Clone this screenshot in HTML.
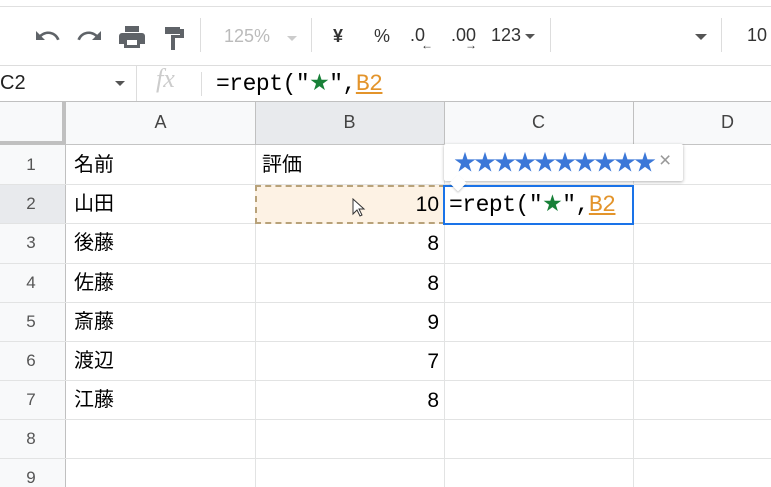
<!DOCTYPE html>
<html><head><meta charset="utf-8"><style>
*{margin:0;padding:0;box-sizing:border-box}
html,body{width:771px;height:487px;overflow:hidden}
body{background:#fff;font-family:"Liberation Sans","Noto Sans CJK JP",sans-serif;position:relative}
.abs{position:absolute}
.tb{color:#333;font-size:18px}
.vsep{position:absolute;width:1px;background:#ddd}
.cell{position:absolute;font-size:20px;color:#000;line-height:39px}
.rn{position:absolute;left:0;width:62px;text-align:center;color:#555;font-size:17px;line-height:39px}
.hl{position:absolute;left:0;width:771px;height:1px;background:#e2e3e3}
.vl{position:absolute;height:342px;width:1px;background:#e2e3e3}
.mono{font-family:'Liberation Mono',monospace;font-size:23px;color:#000;white-space:nowrap;letter-spacing:-0.5px}
</style></head><body>
<div class="abs" style="left:0;top:6px;width:771px;height:1px;background:#e0e0e0"></div>
<!-- toolbar icons -->
<svg class="abs" style="left:34px;top:28px" width="28" height="18" viewBox="0 0 28 18">
<path d="M2 3v9h9l-3.4-3.4C9.5 7 11.8 6 14.3 6c4 0 7.5 2.6 8.7 6.3l2.6-.9C24 6.8 19.6 3.5 14.3 3.5c-3.3 0-6.3 1.3-8.5 3.3z" fill="#5f6368"/></svg>
<svg class="abs" style="left:75px;top:28px" width="28" height="18" viewBox="0 0 28 18">
<path d="M26 3v9h-9l3.4-3.4C18.5 7 16.2 6 13.7 6c-4 0-7.5 2.6-8.7 6.3l-2.6-.9C4 6.8 8.4 3.5 13.7 3.5c3.3 0 6.3 1.3 8.5 3.3z" fill="#5f6368"/></svg>
<svg class="abs" style="left:119px;top:26px" width="26" height="22" viewBox="0 0 26 22">
<path d="M6 0h14v6H6zM3 7h20a3 3 0 0 1 3 3v8h-5v4H5v-4H0v-8a3 3 0 0 1 3-3zM8 14v5h10v-5z" fill="#5f6368"/></svg>
<svg class="abs" style="left:164px;top:26px" width="22" height="24" viewBox="0 0 22 24">
<path d="M1 1h15v7H1zM16 3h4v9h-9v3H7v-6h9z" fill="#5f6368"/><path d="M7 14h4v10H7z" fill="#5f6368"/></svg>
<div class="vsep" style="left:200px;top:18px;height:34px"></div>
<div class="abs tb" style="left:224px;top:26px;color:#bbb">125%</div>
<div class="abs" style="left:287px;top:36px;border:5px solid transparent;border-top:5px solid #ccc"></div>
<div class="vsep" style="left:311px;top:18px;height:34px"></div>
<div class="abs tb" style="left:333px;top:26px;font-weight:bold">¥</div>
<div class="abs tb" style="left:374px;top:26px">%</div>
<div class="abs tb" style="left:410px;top:25px">.0</div>
<div class="abs" style="left:421px;top:38px;font-size:12px;color:#333;font-weight:bold">←</div>
<div class="abs tb" style="left:451px;top:25px">.00</div>
<div class="abs" style="left:465px;top:38px;font-size:12px;color:#333;font-weight:bold">→</div>
<div class="abs tb" style="left:491px;top:25px">123</div>
<div class="abs" style="left:525px;top:34px;border:5px solid transparent;border-top:5px solid #555"></div>
<div class="vsep" style="left:550px;top:18px;height:34px"></div>
<div class="abs" style="left:695px;top:34px;border:6px solid transparent;border-top:6px solid #555"></div>
<div class="vsep" style="left:721px;top:18px;height:34px"></div>
<div class="abs tb" style="left:747px;top:25px">10</div>
<div class="abs" style="left:0;top:65px;width:771px;height:1px;background:#ddd"></div>
<!-- formula bar -->
<div class="abs" style="left:0;top:72px;font-size:20px;color:#222">C2</div>
<div class="abs" style="left:115px;top:81px;border:5px solid transparent;border-top:5px solid #555"></div>
<div class="vsep" style="left:136px;top:66px;height:35px;background:#ddd"></div>
<div class="abs" style="left:156px;top:64px;font-family:'Liberation Serif',serif;font-style:italic;font-size:26px;color:#ccc">fx</div>
<div class="vsep" style="left:201px;top:72px;height:24px"></div>
<div class="abs mono" style="left:216px;top:70px">=rept("<span style="color:#188038">★</span>",<span style="color:#e3942b;text-decoration:underline">B2</span></div>
<!-- headers -->
<div class="abs" style="left:0;top:101px;width:771px;height:44px;background:#f8f9fa;border-top:1px solid #c0c0c0;border-bottom:1px solid #c4c4c4"></div>
<div class="abs" style="left:62px;top:101px;width:4px;height:44px;background:#c0c0c0"></div>
<div class="abs" style="left:0;top:141px;width:66px;height:4px;background:#c0c0c0"></div>
<div class="abs" style="left:255px;top:102px;width:189px;height:42px;background:#e8eaed"></div>
<div class="abs" style="left:255px;top:101px;width:1px;height:44px;background:#c0c0c0"></div>
<div class="abs" style="left:444px;top:101px;width:1px;height:44px;background:#c0c0c0"></div>
<div class="abs" style="left:633px;top:101px;width:1px;height:44px;background:#c0c0c0"></div>
<div class="abs" style="left:66px;top:112px;width:189px;text-align:center;font-size:18px;color:#444">A</div>
<div class="abs" style="left:255px;top:112px;width:189px;text-align:center;font-size:18px;color:#444">B</div>
<div class="abs" style="left:444px;top:112px;width:189px;text-align:center;font-size:18px;color:#444">C</div>
<div class="abs" style="left:633px;top:112px;width:189px;text-align:center;font-size:18px;color:#444">D</div>
<!-- row header -->
<div class="abs" style="left:0;top:145px;width:66px;height:342px;background:#f8f9fa"></div>
<div class="abs" style="left:0;top:185px;width:66px;height:38px;background:#e8eaed"></div>
<div class="abs" style="left:65px;top:145px;width:1px;height:342px;background:#c0c0c0"></div>
<div class="rn" style="top:145px">1</div><div class="rn" style="top:184px">2</div><div class="rn" style="top:223px">3</div>
<div class="rn" style="top:263px">4</div><div class="rn" style="top:302px">5</div><div class="rn" style="top:341px">6</div>
<div class="rn" style="top:380px">7</div><div class="rn" style="top:419px">8</div><div class="rn" style="top:458px">9</div>
<!-- grid -->
<div class="hl" style="top:184px"></div><div class="hl" style="top:223px"></div><div class="hl" style="top:263px"></div>
<div class="hl" style="top:302px"></div><div class="hl" style="top:341px"></div><div class="hl" style="top:380px"></div>
<div class="hl" style="top:419px"></div><div class="hl" style="top:458px"></div>
<div class="vl" style="left:255px;top:145px"></div><div class="vl" style="left:444px;top:145px"></div><div class="vl" style="left:633px;top:145px"></div>
<!-- B2 selection -->
<div class="abs" style="left:255px;top:185px;width:190px;height:39px;background:#fdf2e4;border:2px dashed #b8a27a"></div>
<svg class="abs" style="left:352px;top:198px" width="14" height="20" viewBox="0 0 14 20"><path d="M1 1v15l4-4 3 6 2-1-3-6h5z" fill="#fff" stroke="#333" stroke-width="1"/></svg>
<!-- cells -->
<div class="cell" style="left:74px;top:146px">名前</div>
<div class="cell" style="left:262px;top:146px">評価</div>
<div class="cell" style="left:74px;top:185px">山田</div>
<div class="cell" style="left:74px;top:224px">後藤</div>
<div class="cell" style="left:74px;top:264px">佐藤</div>
<div class="cell" style="left:74px;top:303px">斎藤</div>
<div class="cell" style="left:74px;top:342px">渡辺</div>
<div class="cell" style="left:74px;top:381px">江藤</div>
<div class="cell" style="left:255px;width:184px;text-align:right;top:185px;font-size:21px">10</div>
<div class="cell" style="left:255px;width:184px;text-align:right;top:224px;font-size:21px">8</div>
<div class="cell" style="left:255px;width:184px;text-align:right;top:264px;font-size:21px">8</div>
<div class="cell" style="left:255px;width:184px;text-align:right;top:303px;font-size:21px">9</div>
<div class="cell" style="left:255px;width:184px;text-align:right;top:342px;font-size:21px">7</div>
<div class="cell" style="left:255px;width:184px;text-align:right;top:381px;font-size:21px">8</div>
<!-- editor -->
<div class="abs" style="left:443px;top:185px;width:191px;height:40px;background:#fff;border:2px solid #1a73e8"></div>
<div class="abs mono" style="left:449px;top:191px">=rept("<span style="color:#188038">★</span>",<span style="color:#e3942b;text-decoration:underline">B2</span></div>
<!-- tooltip -->
<div class="abs" style="left:444px;top:144px;width:239px;height:37px;background:#fff;box-shadow:0 1px 3px rgba(0,0,0,.3);border-radius:2px"></div>
<div class="abs" style="left:452px;top:177px;width:12px;height:12px;background:#fff;transform:rotate(45deg);box-shadow:1px 1px 2px rgba(0,0,0,.2)"></div>
<div class="abs" style="left:454px;top:145px;font-size:22px;color:#3c78d8;letter-spacing:-2px;white-space:nowrap">★★★★★★★★★★</div>
<div class="abs" style="left:659px;top:149px;font-size:21px;color:#999">×</div>
</body></html>
